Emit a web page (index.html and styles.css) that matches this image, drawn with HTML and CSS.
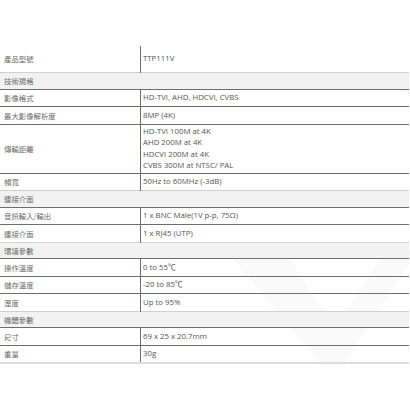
FILE: index.html
```html
<!DOCTYPE html>
<html lang="zh-Hant">
<head>
<meta charset="utf-8">
<link rel="stylesheet" href="styles.css">
</head>
<body>
<div class="page">
<svg class="watermark" width="410" height="410" viewBox="0 0 410 410">
  <path d="M335 95 A95 95 0 0 1 410 88 L410 235 A70 70 0 0 0 335 95 Z" fill="#f9f9f9"/>
  <path d="M225 250 L285 250 L335 330 L385 250 L410 250 L410 262 L345 362 L320 362 Z" fill="#fafafa"/>
</svg>
<table class="spec">
  <tr class="first"><td class="k">產品型號</td><td class="v">TTP111V</td></tr>
  <tr class="head"><td colspan="2">技術規格</td></tr>
  <tr><td class="k">影像格式</td><td class="v">HD-TVI, AHD, HDCVI, CVBS</td></tr>
  <tr><td class="k">最大影像解析度</td><td class="v">8MP (4K)</td></tr>
  <tr class="multi"><td class="k">傳輸距離</td><td class="v">HD-TVI 100M at 4K<br>AHD 200M at 4K<br>HDCVI 200M at 4K<br>CVBS 300M at NTSC/ PAL</td></tr>
  <tr><td class="k">頻寬</td><td class="v">50Hz to 60MHz (-3dB)</td></tr>
  <tr class="head"><td colspan="2">連接介面</td></tr>
  <tr><td class="k">音訊輸入/輸出</td><td class="v">1 x BNC Male(1V p-p, 75Ω)</td></tr>
  <tr><td class="k">連接介面</td><td class="v">1 x RJ45 (UTP)</td></tr>
  <tr class="head"><td colspan="2">環境參數</td></tr>
  <tr><td class="k">操作溫度</td><td class="v">0 to 55℃</td></tr>
  <tr><td class="k">儲存溫度</td><td class="v">-20 to 85℃</td></tr>
  <tr><td class="k">溼度</td><td class="v">Up to 95%</td></tr>
  <tr class="head"><td colspan="2">機體參數</td></tr>
  <tr><td class="k">尺寸</td><td class="v">69 x 25 x 20.7mm</td></tr>
  <tr class="last"><td class="k">重量</td><td class="v">30g</td></tr>
</table>
</div>
</body>
</html>
```
FILE: styles.css
```css
html, body {
  margin: 0;
  padding: 0;
  background: #ffffff;
}
.page {
  position: relative;
  width: 410px;
  height: 410px;
  padding-top: 46px;
  box-sizing: border-box;
}
.watermark {
  position: absolute;
  left: 0;
  top: 0;
  z-index: 0;
}
.spec {
  position: relative;
  z-index: 1;
  width: 409px;
  border-collapse: collapse;
  font-family: "Open Sans", "Noto Sans CJK TC", sans-serif;
  font-size: 7.8px;
  color: #555555;
  line-height: 11.5px;
}
.spec td {
  padding: 2.5px 4px;
  border-top: 1px solid #6e6e6e;
  vertical-align: middle;
  text-align: left;
}
.spec td.k {
  width: 132px;
  font-family: "Noto Sans CJK TC", sans-serif;
  font-size: 7.4px;
  color: #6a6a6a;
}
.spec td.v {
  border-left: 1.5px solid #6e6e6e;
  padding-left: 2px;
}
.spec tr.first td {
  border-top: none;
  height: 21px;
}
.spec tr.head td {
  background: #f2f2f2;
  border-top: 1px solid #d0d0d0;
  font-family: "Noto Sans CJK TC", sans-serif;
  font-size: 7.4px;
  color: #6a6a6a;
  padding: 2px 4px;
}
.spec tr.multi td {
  padding: 1px 4px 1px 4px;
}
.spec tr.multi td.v {
  padding-left: 2px;
}
.spec tr.last td {
  border-bottom: 2px solid #dcdcdc;
}
```
